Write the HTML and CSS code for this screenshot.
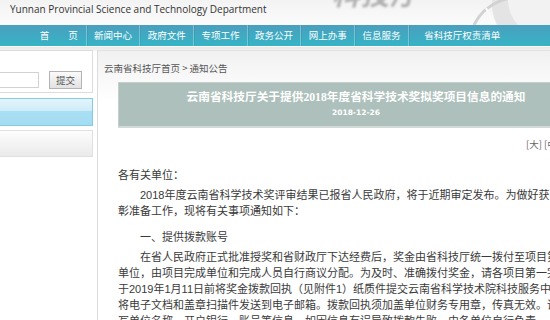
FILE: index.html
```html
<!DOCTYPE html>
<html lang="zh-CN">
<head>
    <meta charset="UTF-8">
    <title>云南省科学技术厅 - 通知公告</title>
    <link rel="stylesheet" href="styles.css">
</head>
<body>
    <div class="site">
        <header class="top">
            <div class="brand">Yunnan Provincial Science and Technology Department</div>
            <div class="logo-mark">科技厅</div>
            <svg class="globe" width="110" height="25" viewBox="0 0 110 25">
                <circle cx="98" cy="4" r="46" fill="#e4e4e4"/>
                <circle cx="104" cy="0" r="36" fill="#f2f2f2"/>
                <path d="M34 25 Q44 4 70 -2" stroke="#d2d2d2" stroke-width="3" fill="none"/>
                <path d="M46 8 L52 20" stroke="#fafafa" stroke-width="2" fill="none"/>
            </svg>
        </header>

        <nav class="menu">
            <a class="menu-item">首　　页</a>
            <a class="menu-item">新闻中心</a>
            <a class="menu-item">政府文件</a>
            <a class="menu-item">专项工作</a>
            <a class="menu-item">政务公开</a>
            <a class="menu-item">网上办事</a>
            <a class="menu-item">信息服务</a>
            <a class="menu-item wide">省科技厅权责清单</a>
        </nav>

        <div class="page">
            <aside class="side">
                <div class="search-box">
                    <input class="search-input" type="text">
                    <button class="search-btn">提交</button>
                </div>
                <div class="side-tab"></div>
                <div class="side-panel"></div>
            </aside>

            <main class="content">
                <div class="crumb">云南省科技厅首页 &gt; 通知公告</div>

                <div class="article">
                    <div class="article-head">
                        <h1>云南省科技厅关于提供2018年度省科学技术奖拟奖项目信息的通知</h1>
                        <div class="article-date">2018-12-26</div>
                    </div>
                    <div class="font-size">[大] [中] [小]</div>

                    <div class="article-body">
                        <p class="salute">各有关单位：</p>
                        <p class="para">2018年度云南省科学技术奖评审结果已报省人民政府，将于近期审定发布。为做好获奖项目表彰准备工作，现将有关事项通知如下：</p>
                        <p class="para heading">一、提供拨款账号</p>
                        <p class="para">在省人民政府正式批准授奖和省财政厅下达经费后，奖金由省科技厅统一拨付至项目第一完成单位，由项目完成单位和完成人员自行商议分配。为及时、准确拨付奖金，请各项目第一完成单位于2019年1月11日前将奖金拨款回执（见附件1）纸质件提交云南省科学技术院科技服务中心，同时将电子文档和盖章扫描件发送到电子邮箱。拨款回执须加盖单位财务专用章，传真无效。请认真填写单位名称、开户银行、账号等信息，如因信息有误导致拨款失败，由各单位自行负责。</p>
                    </div>
                </div>
            </main>
        </div>
    </div>
</body>
</html>
```

FILE: styles.css
```css
html, body {
    margin: 0;
    overflow: hidden;
}
body {
    font-family: "Noto Sans CJK SC", sans-serif;
    background: #fff;
    color: #333;
}
.site {
    width: 640px;
}

/* header */
.top {
    position: relative;
    height: 25px;
    overflow: hidden;
    background: linear-gradient(#f3f3f3, #fbfbfb);
}
.brand {
    position: relative;
    z-index: 1;
    padding: 2px 0 0 10px;
    font-family: "Open Sans", sans-serif;
    font-size: 10px;
    line-height: 14px;
    color: #333;
}
.logo-mark {
    position: absolute;
    left: 332px;
    top: -27px;
    font-size: 28px;
    font-weight: bold;
    font-style: italic;
    letter-spacing: 1px;
    color: #b0b0b0;
    filter: blur(0.9px);
}
.globe {
    position: absolute;
    right: 90px;
    top: 0;
}

/* nav */
.menu {
    display: flex;
    height: 21px;
    padding-left: 32px;
    background: linear-gradient(#4a9fbe, #36b4c6);
    border-bottom: 1px solid #fff;
}
.menu-item {
    box-sizing: border-box;
    width: 53.7px;
    font-size: 9.5px;
    line-height: 21px;
    text-align: center;
    color: #fff;
    border-left: 1px solid rgba(255,255,255,0.3);
    box-shadow: inset 1px 0 0 rgba(0,0,0,0.06);
}
.menu-item:first-child {
    border-left: none;
    box-shadow: none;
}
.menu-item.wide { width: 108px; }

/* body */
.page {
    display: flex;
    align-items: flex-start;
    padding-top: 3px;
    background: linear-gradient(#e8e8e8, #f4f4f4 4px, #fff 4px);
}
.side {
    width: 153px;
    margin-left: -60px;
}
.search-box {
    display: flex;
    align-items: center;
    justify-content: flex-end;
    gap: 10px;
    box-sizing: border-box;
    height: 43px;
    padding: 19px 10px 3px 0;
    background: #fff;
    border: 1px solid #dcdcdc;
}
.search-input {
    width: 98px;
    height: 16px;
    box-sizing: border-box;
    margin: 0;
    border: 1px solid #d2d2d2;
}
.search-btn {
    width: 33px;
    height: 18px;
    margin: 0;
    padding: 0;
    font-family: inherit;
    font-size: 9.5px;
    color: #555;
    background: linear-gradient(#fafafa, #e2e2e2);
    border: 1px solid #b3b3b3;
}
.side-tab {
    height: 26px;
    margin-top: 5px;
    border: 1px solid #86cbe6;
    background: linear-gradient(#e3f4fb, #cfecf8 45%, #a9dff3 45%, #a4dcf2);
}
.side-panel {
    height: 25px;
    margin-top: 4px;
    border: 1px solid #e0e0e0;
    background: linear-gradient(#fdfdfd, #eaeaea);
}

.content {
    flex: 1;
    margin-left: 4px;
    height: 280px;
    border-left: 1px solid #dcdcdc;
    border-top: 1px solid #e2e2e2;
    background: linear-gradient(#f1f1f1, #fff 50px);
}
.crumb {
    padding: 11px 0 0 6px;
    font-size: 9.5px;
    line-height: 12px;
    color: #555;
}
.article {
    width: 476px;
    margin: 8px 0 0 20px;
}
.article-head {
    height: 46px;
    text-align: center;
    color: #fff;
    background: #adc0bb;
    border: 1px solid #c5d0cd;
    border-bottom: 2px solid #d2dad8;
    box-sizing: border-box;
}
.article-head h1 {
    margin: 0;
    padding-top: 8px;
    font-family: "Liberation Serif", "Noto Sans CJK SC", serif;
    font-size: 11.7px;
    line-height: 14px;
}
.article-date {
    margin-top: 3px;
    font-family: "DejaVu Sans", sans-serif;
    font-size: 7.5px;
    font-weight: bold;
    line-height: 10px;
}
.font-size {
    margin-top: 10px;
    padding-right: 16px;
    text-align: right;
    font-size: 9.5px;
    line-height: 12px;
    color: #666;
}
.article-body {
    width: 483px;
    margin-top: 17px;
    font-family: "Liberation Sans", "Noto Sans CJK SC", sans-serif;
    font-size: 11px;
    line-height: 16px;
    color: #3a3a3a;
}
.article-body p {
    margin: 0;
}
.para {
    text-indent: 2em;
    margin-top: 4px !important;
}
.heading {
    margin-top: 10px !important;
}
```
